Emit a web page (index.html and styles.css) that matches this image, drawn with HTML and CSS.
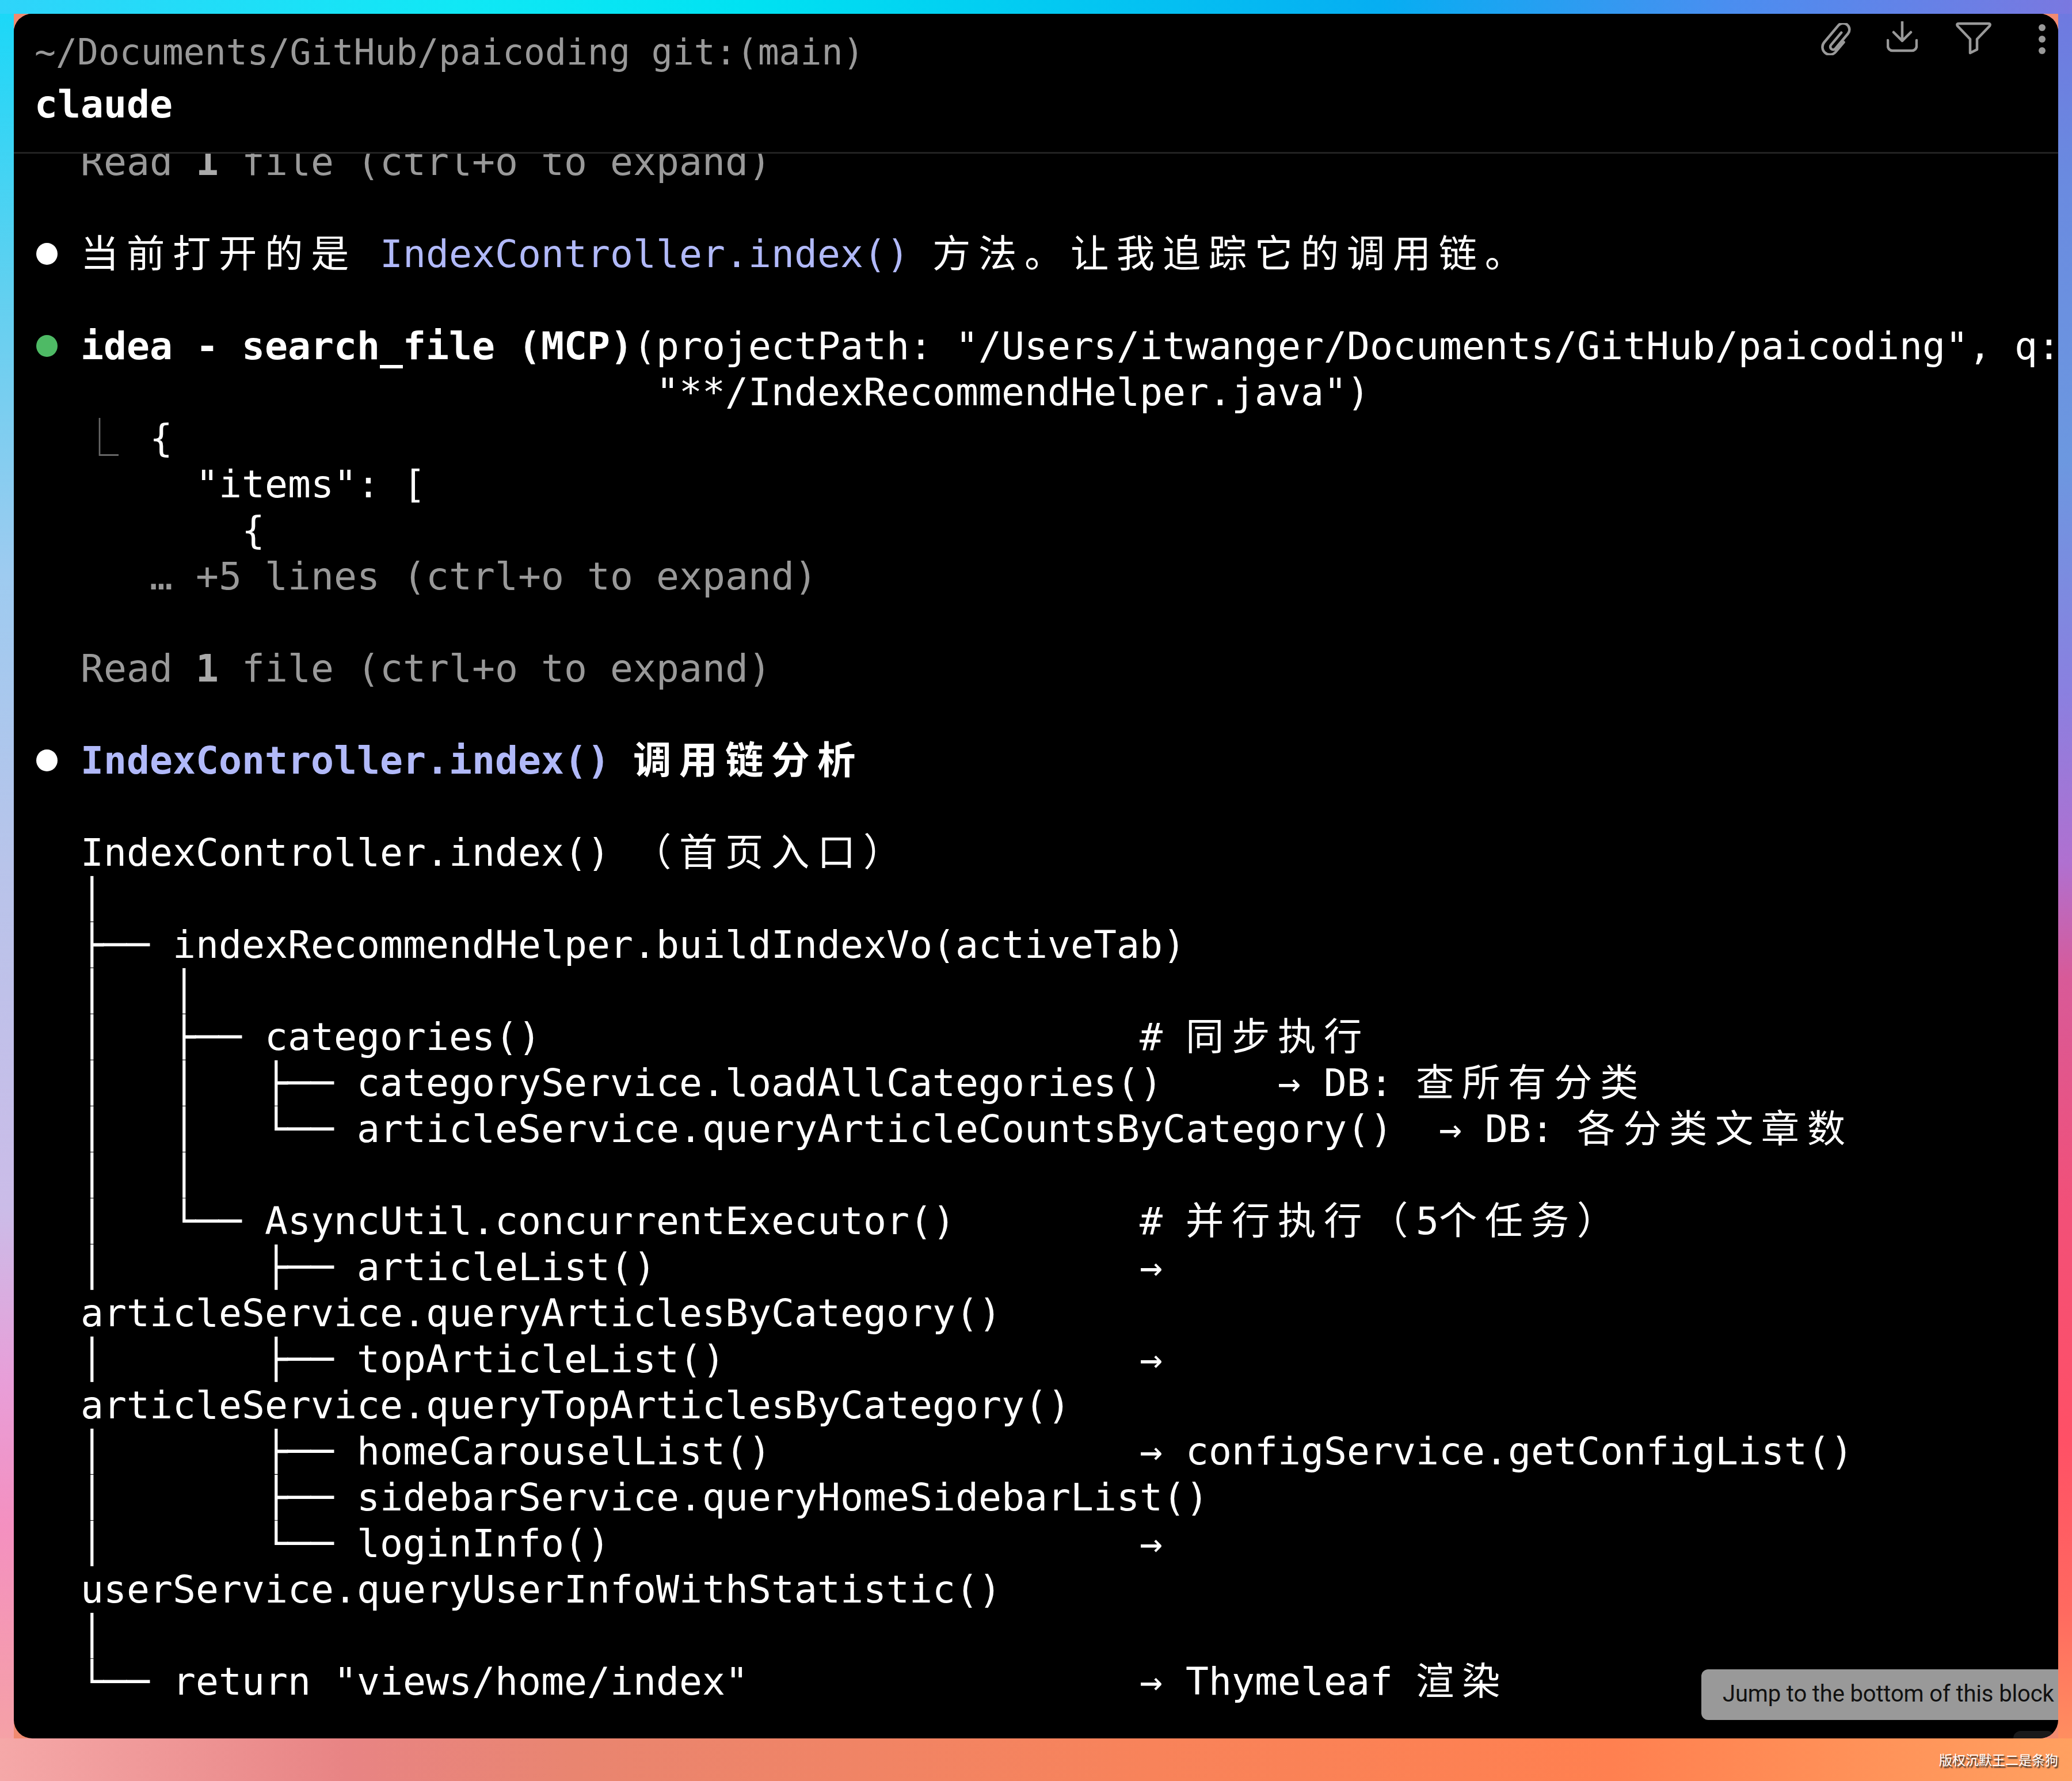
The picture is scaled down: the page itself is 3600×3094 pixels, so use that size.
FILE: index.html
```html
<!DOCTYPE html>
<html lang="zh">
<head>
<meta charset="utf-8">
<title>claude</title>
<link rel="stylesheet" href="styles.css">
</head>
<body>
<div class="desk">
  <main class="term">
    <header class="head">
      <div class="cwd">~/Documents/GitHub/paicoding git:(main)</div>
      <div class="cmd">claude</div>
    </header>
    <div class="tools">
      <svg class="ic ic-clip" viewBox="0 0 54 56"><g transform="translate(27 28) rotate(40)"><path d="M13 -4V18a13 13 0 0 1 -26 0V-20a11 11 0 0 1 22 0V14a5 5 0 0 1 -10 0V-14"/></g></svg>
      <svg class="ic ic-down" viewBox="0 0 54 54"><path d="M27 1V34M12 19L27 34L42 19M2 33V43a8 8 0 0 0 8 8H44a8 8 0 0 0 8 -8V33"/></svg>
      <svg class="ic ic-funnel" viewBox="0 0 62 58"><path d="M5 3H57Q61 3 59 7L37 30V48L25 54V30L3 7Q1 3 5 3Z"/></svg>
      <svg class="ic ic-dots" viewBox="0 0 12 52"><circle cx="6" cy="6" r="6"/><circle cx="6" cy="26" r="6"/><circle cx="6" cy="46" r="6"/></svg>
    </div>
    <div class="log">
      <div class="row dim">  Read <b>1</b> file (ctrl+o to expand)</div>
      <div class="row"> </div>
      <div class="row"><span class="dot"></span> <span class="cjk">当前打开的是</span> <span class="sym">IndexController.index()</span> <span class="cjk">方法。让我追踪它的调用链。</span></div>
      <div class="row"> </div>
      <div class="row"><span class="dot green"></span> <b>idea - search_file (MCP)</b>(projectPath: "/Users/itwanger/Documents/GitHub/paicoding", q:</div>
      <div class="row">                           "**/IndexRecommendHelper.java")</div>
      <div class="row">  <span class="elbow">⎿</span>  {</div>
      <div class="row">       "items": [</div>
      <div class="row">         {</div>
      <div class="row dim">     … +5 lines (ctrl+o to expand)</div>
      <div class="row"> </div>
      <div class="row dim">  Read <b>1</b> file (ctrl+o to expand)</div>
      <div class="row"> </div>
      <div class="row"><span class="dot"></span> <b class="sym">IndexController.index()</b> <b class="cjk">调用链分析</b></div>
      <div class="row"> </div>
      <div class="row">  IndexController.index() <span class="cjk">（首页入口）</span></div>
      <div class="row">  │</div>
      <div class="row">  ├── indexRecommendHelper.buildIndexVo(activeTab)</div>
      <div class="row">  │   │</div>
      <div class="row">  │   ├── categories()                          # <span class="cjk">同步执行</span></div>
      <div class="row">  │   │   ├── categoryService.loadAllCategories()     → DB: <span class="cjk">查所有分类</span></div>
      <div class="row">  │   │   └── articleService.queryArticleCountsByCategory()  → DB: <span class="cjk">各分类文章数</span></div>
      <div class="row">  │   │</div>
      <div class="row">  │   └── AsyncUtil.concurrentExecutor()        # <span class="cjk">并行执行（</span>5<span class="cjk">个任务）</span></div>
      <div class="row">  │       ├── articleList()                     →</div>
      <div class="row">  articleService.queryArticlesByCategory()</div>
      <div class="row">  │       ├── topArticleList()                  →</div>
      <div class="row">  articleService.queryTopArticlesByCategory()</div>
      <div class="row">  │       ├── homeCarouselList()                → configService.getConfigList()</div>
      <div class="row">  │       ├── sidebarService.queryHomeSidebarList()</div>
      <div class="row">  │       └── loginInfo()                       →</div>
      <div class="row">  userService.queryUserInfoWithStatistic()</div>
      <div class="row">  │</div>
      <div class="row">  └── return "views/home/index"                 → Thymeleaf <span class="cjk">渲染</span></div>
    </div>
    <div class="jump">Jump to the bottom of this block</div>
    <div class="nub"></div>
  </main>
  <footer class="mark">版权沉默王二是条狗</footer>
</div>
</body>
</html>
```
FILE: styles.css
```css
html, body { margin: 0; padding: 0; }
.desk {
  box-sizing: border-box;
  width: 3600px;
  height: 3094px;
  padding: 24px 24px 0;
  overflow: hidden;
  background-color: #f08a70;
  background-repeat: no-repeat;
  background-image:
    linear-gradient(to right, #2fd4fa 0, #10e8f5 800px, #00e2f2 1300px, #06aef2 2400px, #4a8ef0 3000px, #7a78e0 3600px),
    linear-gradient(to right, #f5a8a8 0, #e88484 600px, #e98570 1000px, #f8835a 2000px, #ff8050 2800px, #ffa060 3600px),
    linear-gradient(to bottom, #18d8f8 0, #60d0f0 500px, #9ecbf0 1000px, #b8c4ea 1500px, #cbbce8 2100px, #e89ed8 2400px, #f490c0 2650px, #f5a0a8 3000px, #f5aaa0 3094px),
    linear-gradient(to bottom, #6f78e0 0, #6a8ae0 300px, #6c98e0 800px, #8a80e0 1200px, #b070d0 1500px, #d85a98 1700px, #f25078 2100px, #ff5066 2500px, #ff6a60 2800px, #ff9a60 3094px);
  background-size: 100% 24px, 100% 74px, 24px 100%, 24px 100%;
  background-position: 0 0, 0 100%, 0 0, 100% 0;
}
.term {
  position: relative;
  box-sizing: border-box;
  height: 2996px;
  background: #000;
  border-radius: 32px;
  overflow: hidden;
  color: #fff;
  font-family: "DejaVu Sans Mono", monospace;
  font-size: 66.45px;
}
.head {
  position: relative;
  z-index: 2;
  box-sizing: border-box;
  height: 243px;
  padding: 21px 0 0 36px;
  background: #000;
  border-bottom: 3px solid #222;
}
.cwd { height: 91px; line-height: 91px; font-size: 61.4px; color: #999; white-space: pre; }
.cmd { height: 91px; line-height: 91px; font-weight: 700; white-space: pre; }
.tools {
  position: absolute;
  z-index: 3;
  top: 13px;
  right: 22px;
  display: flex;
  align-items: flex-start;
  gap: 60px;
}
.ic { display: block; fill: none; stroke: #999; stroke-width: 4.5; stroke-linejoin: round; stroke-linecap: round; }
.ic-clip { width: 54px; height: 56px; margin-top: 3px; }
.ic-down { width: 54px; height: 54px; }
.ic-funnel { width: 62px; height: 58px; margin-top: 1px; margin-left: 6px; }
.ic-dots { width: 12px; height: 52px; margin-top: 5px; margin-left: 22px; fill: #999; stroke: none; }
.log {
  margin-top: -26px;
  padding-left: 36px;
}
.row {
  height: 80px;
  line-height: 80px;
  white-space: pre;
}
.dim { color: #999; }
.dim b { color: #aaa; }
.sym { color: #b1b9f9; }
.dot {
  display: inline-block;
  width: 37px;
  height: 38px;
  margin-left: 3px;
  border-radius: 50%;
  background: #fff;
  vertical-align: 4px;
}
.dot.green { background: #4eba65; }
.elbow {
  display: inline-block;
  width: 40px;
  line-height: 0;
  color: #666;
}
.cjk {
  font-family: "Noto Sans CJK SC", sans-serif;
  font-size: 66.45px;
  line-height: 0;
  letter-spacing: 13.55px;
}
.jump {
  position: absolute;
  z-index: 3;
  right: 0;
  bottom: 32px;
  box-sizing: border-box;
  width: 620px;
  height: 88px;
  padding-left: 37px;
  border-radius: 12px 0 0 12px;
  background: #999;
  color: #111;
  font-family: Roboto, sans-serif;
  font-size: 40px;
  letter-spacing: -0.15px;
  line-height: 86px;
  white-space: nowrap;
}
.nub {
  position: absolute;
  right: 6px;
  bottom: 0;
  width: 72px;
  height: 13px;
  border-radius: 16px 16px 0 0;
  background: #1a1a1a;
}
.mark {
  margin-top: 20px;
  text-align: right;
  font-family: "Noto Sans CJK SC", sans-serif;
  font-size: 23px;
  line-height: 32px;
  color: #fff;
  text-shadow: 2px 3px 2px #222;
}
```
